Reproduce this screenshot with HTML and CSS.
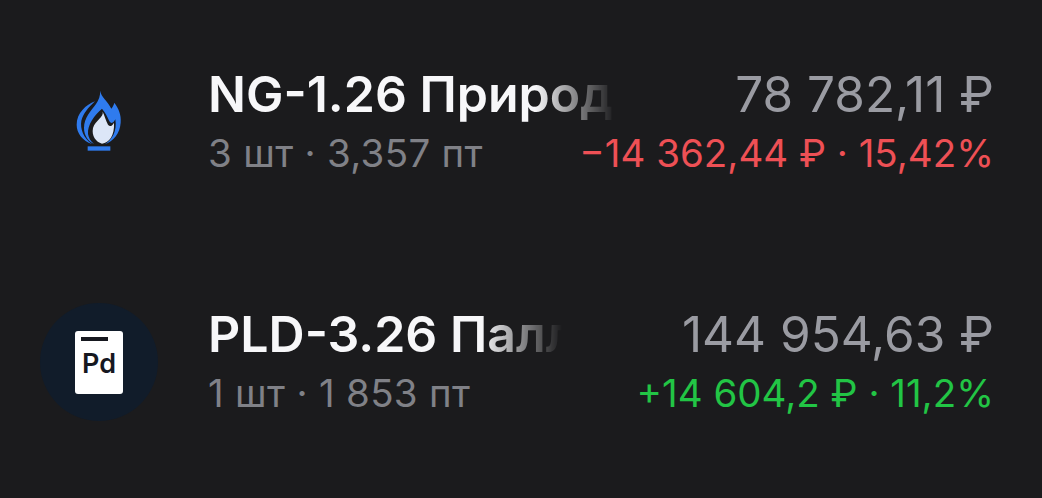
FILE: index.html
```html
<!DOCTYPE html>
<html lang="ru">
<head>
  <meta charset="UTF-8">
  <title>Portfolio</title>
  <link rel="stylesheet" href="styles.css">
</head>
<body>

  <div class="list">
    <div class="row">
      <div class="icon">
        <svg class="flame" viewBox="87 66 240 240">
          <path fill="#2f7bee" d="M210 92 C214 112 232 122 244 146 C250 138 252 132 253 128 C266 146 274 164 272 188 C270 220 250 244 224 253 C246 240 262 214 256 178 C250 190 244 192 238 184 C232 170 226 158 216 146 C194 164 172 194 174 222 C176 234 182 244 192 252 C174 244 162 226 162 204 C162 172 184 152 198 132 C206 120 212 106 210 92 Z"/>
          <path fill="#2f7bee" d="M195 124 C174 144 160 160 154 182 C150 206 160 234 186 252 C158 242 140 220 140 194 C140 160 168 134 195 124 Z"/>
          <path fill="#dce6f7" d="M218 155 C222 172 196 180 189 204 C184 228 198 246 216 251 C238 248 254 226 252 188 C246 198 240 202 234 194 C228 182 224 168 218 155 Z"/>
          <rect fill="#2f7bee" x="173" y="259" width="68" height="13"/>
        </svg>
      </div>
      <div class="info">
        <div class="line">
          <div class="title">NG-1.26 Природ</div>
          <div class="price">78 782,11 ₽</div>
        </div>
        <div class="line sub-line">
          <div class="sub">3 шт · 3,357 пт</div>
          <div class="change red">−14 362,44 ₽ · 15,42%</div>
        </div>
      </div>
    </div>

    <div class="row">
      <div class="icon circle">
        <div class="doc">
          <div class="doc-bar"></div>
          <div class="doc-text">Pd</div>
        </div>
      </div>
      <div class="info">
        <div class="line">
          <div class="title">PLD-3.26 Палл</div>
          <div class="price">144 954,63 ₽</div>
        </div>
        <div class="line sub-line">
          <div class="sub">1 шт · 1 853 пт</div>
          <div class="change green">+14 604,2 ₽ · 11,2%</div>
        </div>
      </div>
    </div>
  </div>

</body>
</html>
```

FILE: styles.css
```css
body {
  margin: 0;
  background-color: #1b1b1d;
  font-family: Inter, "Noto Sans", sans-serif;
}

.list {
  padding: 0 48px 0 40px;
}

.row {
  display: flex;
  align-items: center;
  height: 240px;
  padding-top: 2px;
}

.row + .row {
  padding-top: 0;
}

.icon {
  flex: none;
  display: flex;
  align-items: center;
  justify-content: center;
  width: 118px;
  height: 118px;
  margin-right: 50px;
}

.circle {
  border-radius: 50%;
  background-color: #111c2a;
}

.flame {
  flex: none;
  width: 80px;
  height: 80px;
}

.doc {
  box-sizing: border-box;
  width: 48px;
  height: 63px;
  padding: 6px;
  border-radius: 3px;
  background-color: #ffffff;
}

.doc-bar {
  width: 27px;
  height: 4px;
  background-color: #16181f;
}

.doc-text {
  margin: 7px -6px 0;
  color: #16181f;
  font-size: 27px;
  font-weight: 600;
  line-height: 32px;
  text-align: center;
}

.info {
  flex: 1;
  min-width: 0;
  padding-bottom: 5px;
}

.line {
  display: flex;
  justify-content: space-between;
  align-items: baseline;
}

.sub-line {
  margin-top: 8px;
}

.title {
  flex: 1;
  min-width: 0;
  overflow: hidden;
  white-space: nowrap;
  color: #f7f7f9;
  font-size: 50px;
  font-weight: 600;
  line-height: 58px;
  -webkit-mask-image: linear-gradient(to left, transparent, #000 80px);
  mask-image: linear-gradient(to left, transparent, #000 80px);
}

.price {
  flex: none;
  margin-left: 120px;
  color: #9a9ba2;
  font-size: 49.5px;
  line-height: 58px;
}

.sub {
  color: #808187;
  font-size: 38.5px;
  letter-spacing: 0.3px;
  line-height: 44px;
}

.change {
  font-size: 38.5px;
  line-height: 44px;
}

.red {
  color: #ee5055;
}

.green {
  color: #22c545;
}
```
